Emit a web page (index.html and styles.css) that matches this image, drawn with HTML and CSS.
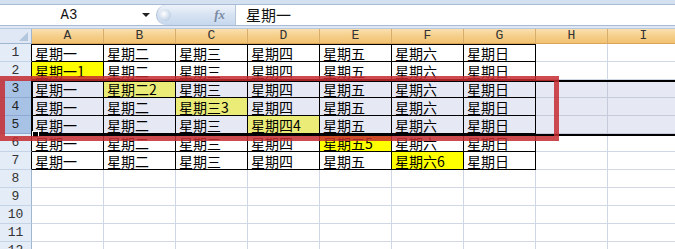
FILE: index.html
```html
<!DOCTYPE html>
<html lang="zh-CN">
<head>
  <meta charset="UTF-8" />
  <title>Excel - 星期</title>
  <link rel="stylesheet" href="styles.css">
</head>
<body>
  <div class="app">
    <div class="formula-bar">
      <div class="formula-row">
        <div class="name-box">
          <span class="name-value">A3</span>
          <span class="name-arrow"></span>
        </div>
        <div class="fx-pill">
          <span class="pill-knob"></span>
          <span class="fx">fx</span>
        </div>
        <div class="formula-input">星期一</div>
      </div>
    </div>

    <div class="sheet-wrap">
      <div class="sheet" id="sheet"></div>
      <div class="selection"><span class="fill-handle"></span></div>
    </div>

    <div class="callout"></div>
  </div>

  <script>
    const sheet = document.getElementById('sheet');
    const days = ['星期一', '星期二', '星期三', '星期四', '星期五', '星期六', '星期日'];
    const cols = ['A', 'B', 'C', 'D', 'E', 'F', 'G', 'H', 'I'];

    function cellText(row, col) {
      if (row > 7 || col > 6) return '';
      let text = days[col];
      if (row >= 2 && col === row - 2) text += (row - 1);
      return text;
    }

    function render() {
      let html = '<div class="corner"><span class="corner-tri"></span></div>';
      html += cols.map(c => `<div class="colhead">${c}</div>`).join('');

      for (let r = 1; r <= 12; r++) {
        const sel = r >= 3 && r <= 5;
        const rowCls = ['rowhead'];
        if (sel) rowCls.push('sel');
        if (r <= 7) rowCls.push('edge');
        html += `<div class="${rowCls.join(' ')}">${r}</div>`;

        for (let c = 0; c < cols.length; c++) {
          const cls = ['cell'];
          if (r <= 7 && c <= 6) cls.push('data');
          if (r === 1 && c <= 6) cls.push('top');
          if (sel) cls.push('sel');
          if (r >= 2 && r <= 7 && c === r - 2) cls.push('hl');
          html += `<div class="${cls.join(' ')}">${cellText(r, c)}</div>`;
        }
      }
      sheet.innerHTML = html;
    }

    render();
  </script>
</body>
</html>
```

FILE: styles.css
```css
:root {
  --grid: #d0d7e5;
  --head-line: #9eb6ce;
  --row-head: #e4ecf7;
  --row-head-sel: #a8c2e6;
  --sel-fill: #e6e8f3;
  --yellow: #ffff00;
  --yellow-sel: #ebeb78;
  --cjk: "Noto Sans CJK SC", "Noto Sans", sans-serif;
  --mono: "Liberation Mono", "DejaVu Sans Mono", monospace;
}

html, body {
  margin: 0;
  width: 675px;
  height: 249px;
  overflow: hidden;
  background: #fff;
}

.app {
  position: relative;
  width: 675px;
  height: 249px;
}

/* formula bar */

.formula-bar {
  height: 29px;
  box-sizing: border-box;
  padding-top: 4px;
  background: linear-gradient(#d3e0f0, #dfe8f4);
  border-bottom: 1px solid #b9c9dd;
}

.formula-row {
  display: flex;
  height: 20px;
  background: #fff;
  border-top: 1px solid #a7bbd4;
  border-bottom: 1px solid #a7bbd4;
}

.name-box {
  width: 156px;
  display: flex;
  align-items: center;
}

.name-value {
  width: 138px;
  text-align: center;
  font-family: var(--mono);
  font-size: 14px;
  color: #111;
}

.name-arrow {
  width: 0;
  height: 0;
  border-left: 4px solid transparent;
  border-right: 4px solid transparent;
  border-top: 4px solid #222;
  margin-left: 4px;
}

.fx-pill {
  width: 80px;
  display: flex;
  align-items: center;
  justify-content: space-between;
  padding: 0 10px 0 2px;
  box-sizing: border-box;
  border-radius: 10px 0 0 10px;
  background: linear-gradient(#eef3fa, #d4e1f1 55%, #c7d8ee);
  border-left: 1px solid #aebfd6;
  border-right: 1px solid #b5c5da;
}

.pill-knob {
  width: 12px;
  height: 12px;
  border-radius: 50%;
  background: radial-gradient(circle at 40% 40%, #ffffff, #c2d2e6 70%, #9fb5d1);
}

.fx {
  font-family: "Liberation Serif", serif;
  font-style: italic;
  font-weight: bold;
  font-size: 13px;
  color: #7a8aa3;
}

.formula-input {
  flex: 1;
  padding-left: 10px;
  font-family: var(--cjk);
  font-size: 15px;
  line-height: 19px;
  color: #111;
}

/* sheet */

.sheet-wrap {
  position: relative;
}

.sheet {
  display: grid;
  grid-template-columns: 32px repeat(9, 72px);
  grid-template-rows: 15px;
  grid-auto-rows: 18px;
}

.corner {
  background: #dfe8f4;
  border-right: 1px solid var(--head-line);
  border-bottom: 1px solid var(--head-line);
  box-sizing: border-box;
  position: relative;
}

.corner-tri {
  position: absolute;
  right: 3px;
  bottom: 2px;
  width: 0;
  height: 0;
  border-left: 9px solid transparent;
  border-bottom: 9px solid #b4c6dc;
}

.colhead {
  box-sizing: border-box;
  background: linear-gradient(#fae0b0, #f6cf8a 50%, #f2c272);
  border-right: 1px solid #d6ad6c;
  border-bottom: 1px solid #d8a55a;
  text-align: center;
  font-family: var(--mono);
  font-size: 13px;
  line-height: 14px;
  color: #333;
}

.rowhead {
  box-sizing: border-box;
  background: var(--row-head);
  border-right: 1px solid var(--head-line);
  border-bottom: 1px solid #c5d3e6;
  text-align: center;
  font-family: var(--mono);
  font-size: 13px;
  line-height: 18px;
  color: #333;
}

.rowhead.edge {
  border-right-color: #000;
}

.rowhead.sel {
  background: var(--row-head-sel);
  border-bottom-color: #8eaad2;
  color: #222;
}

.cell {
  box-sizing: border-box;
  border-right: 1px solid var(--grid);
  border-bottom: 1px solid var(--grid);
  padding: 1px 0 0 3px;
  font-family: var(--cjk);
  font-size: 14px;
  line-height: 16px;
  color: #000;
  white-space: nowrap;
}

.cell.sel {
  background: var(--sel-fill);
  border-right-color: #c5cbda;
  border-bottom-color: #c5cbda;
}

.cell.data {
  border-right-color: #000;
  border-bottom-color: #000;
}

.cell.top {
  box-shadow: inset 0 1px 0 #000;
}

.cell.hl {
  background: var(--yellow);
}

.cell.sel.hl {
  background: var(--yellow-sel);
}

/* overlays */

.selection {
  position: absolute;
  top: 51px;
  left: 31px;
  width: 660px;
  height: 56px;
  box-sizing: border-box;
  border: 2px solid #000;
  pointer-events: none;
}

.fill-handle {
  position: absolute;
  left: -1px;
  bottom: -4px;
  width: 5px;
  height: 5px;
  background: #000;
  border: 1px solid #fff;
}

.callout {
  position: absolute;
  left: 0;
  top: 76px;
  width: 559px;
  height: 65px;
  box-sizing: border-box;
  border: 5px solid rgba(196, 44, 48, 0.85);
  pointer-events: none;
}
```
